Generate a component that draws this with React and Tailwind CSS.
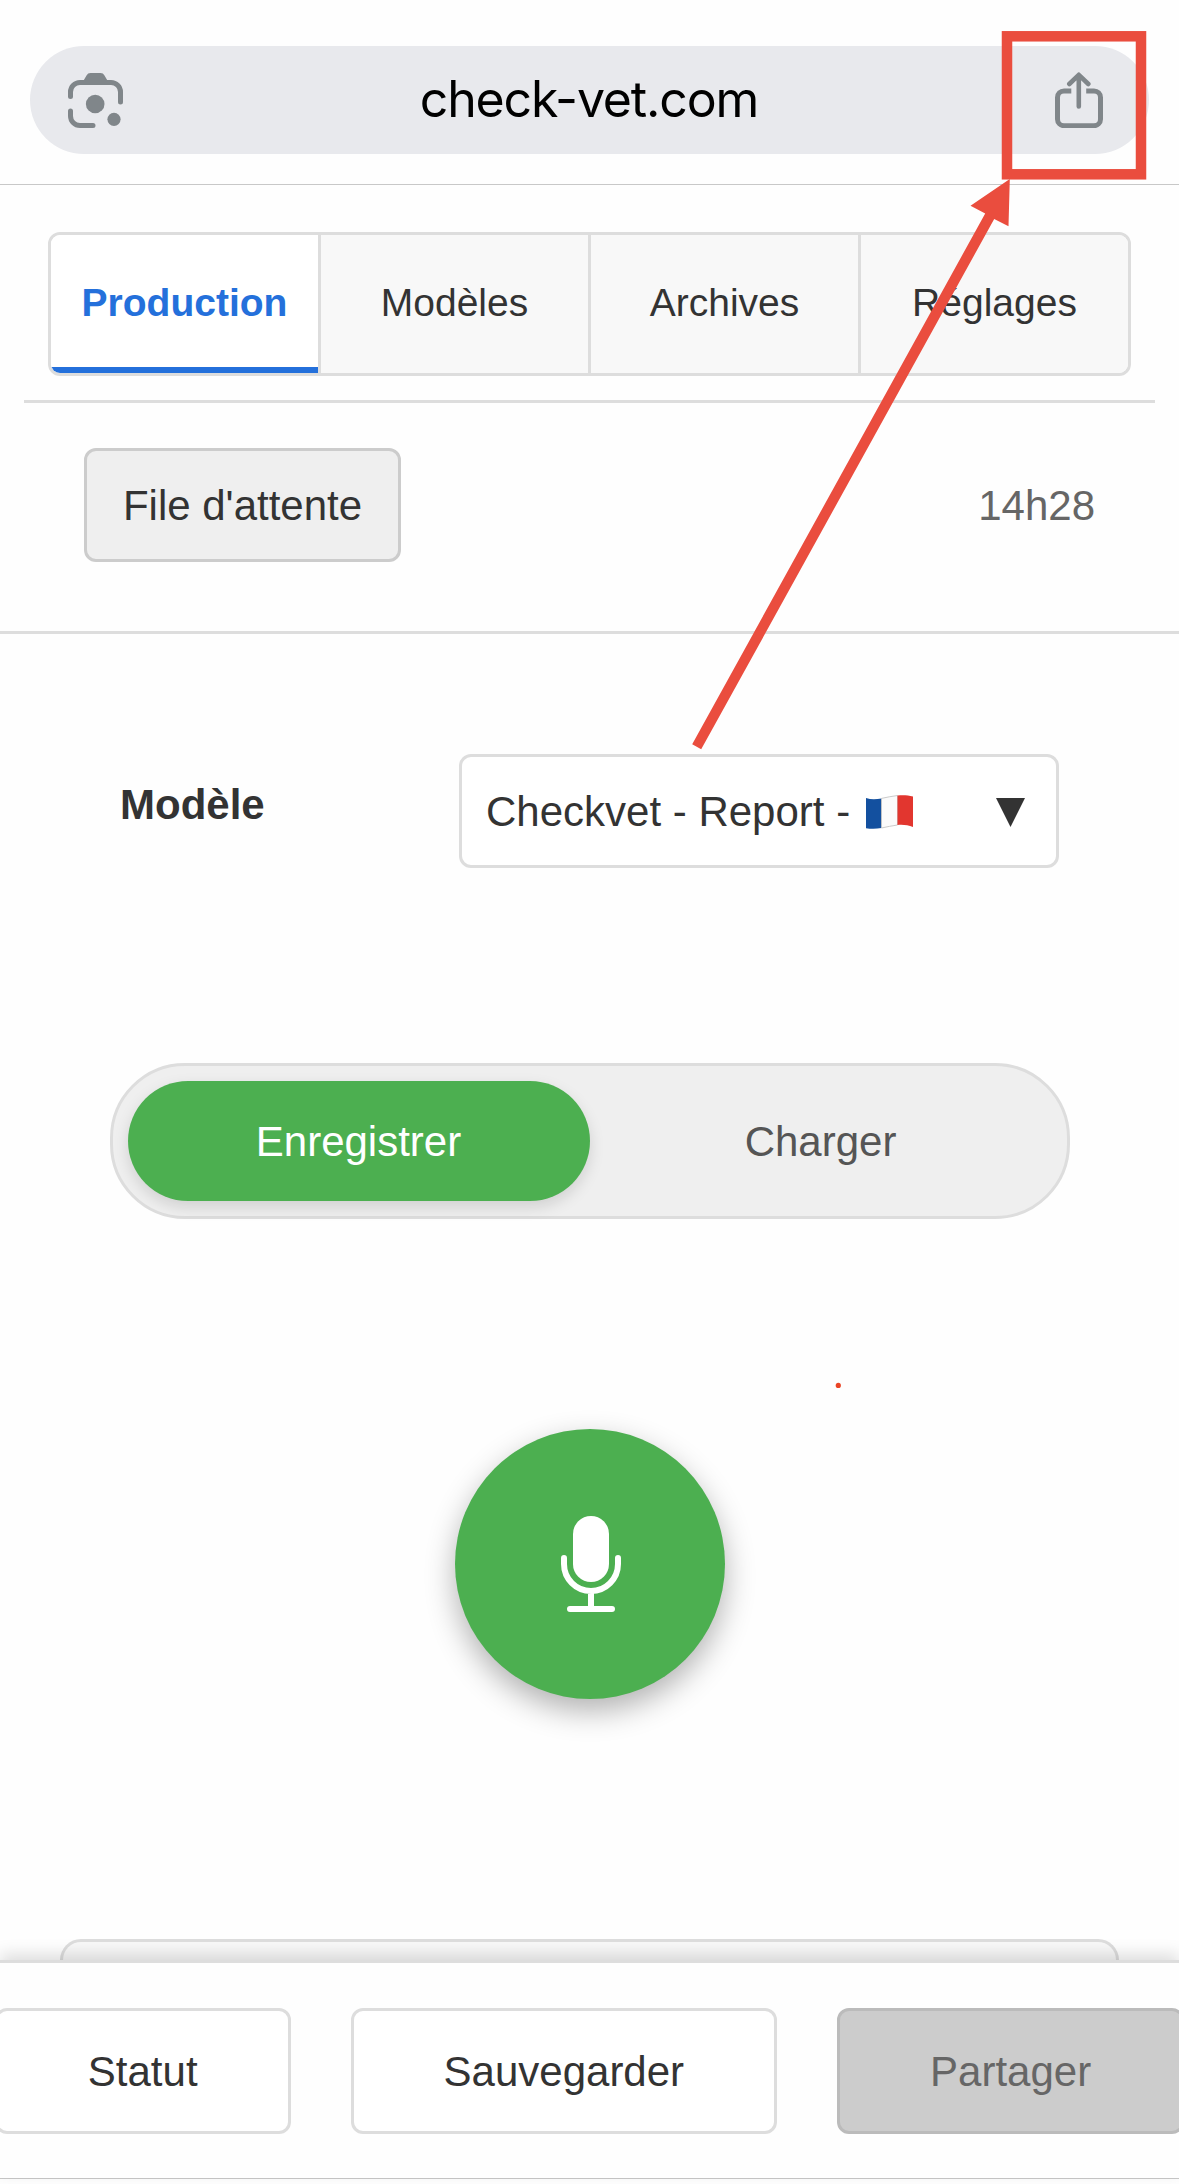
import React from "react";

function LensIcon() {
  return (
    <svg width="55" height="55" viewBox="0 0 55 55" className="block">
      <g fill="none" stroke="#80868a" strokeWidth="5" strokeLinecap="round">
        <path d="M2.5 23.5V19a9.5 9.5 0 0 1 9.5-9.5H43a9.5 9.5 0 0 1 9.5 9.5V29" />
        <path d="M2.5 38V43a9.5 9.5 0 0 0 9.5 9.5H25" />
      </g>
      <path d="M15 8.5L18.5 2.4Q19.8 0 22.5 0H32.5Q35.2 0 36.5 2.4L40 8.5Z" fill="#80868a" />
      <circle cx="27.2" cy="31" r="9.3" fill="#80868a" />
      <circle cx="46" cy="46.3" r="6.6" fill="#80868a" />
    </svg>
  );
}

function ShareIcon() {
  return (
    <svg width="48" height="56" viewBox="0 0 48 56" className="block">
      <g fill="none" stroke="#80868a" strokeWidth="5">
        <path d="M16.3 18.9H9a6.5 6.5 0 0 0-6.5 6.5V47.2a6.5 6.5 0 0 0 6.5 6.5H39a6.5 6.5 0 0 0 6.5-6.5V25.4a6.5 6.5 0 0 0-6.5-6.5H31.2" />
        <path d="M23.8 3.5V34.5M14.3 12L23.8 2.8L33.3 12" strokeLinecap="round" strokeLinejoin="round" strokeWidth="4.6" />
      </g>
    </svg>
  );
}

function FrenchFlag() {
  return (
    <svg width="47" height="34" viewBox="0 0 47 34" className="block">
      <path d="M0 3C5 4.6 10 4.4 15.5 3.4V33C10 34 5 34 0 33.2Z" fill="#13509f" />
      <path d="M15.5 3.4C21 2.4 26 1 31.5.5V30C26 30.6 21 32 15.5 33Z" fill="#fbfbfb" stroke="#bdbdbd" strokeWidth=".8" />
      <path d="M31.5.5C37 -.1 42 .2 47 1.6V32C42 30.2 37 29.4 31.5 30Z" fill="#e2362f" />
    </svg>
  );
}

function MicIcon() {
  return (
    <svg width="60" height="96" viewBox="0 0 60 96" className="ml-0.5 block">
      <rect x="12" y="0" width="36" height="66" rx="18" fill="#fff" />
      <path
        d="M3 42V48a27 27 0 0 0 54 0V42M30 75V93M9 93H51"
        fill="none"
        stroke="#fff"
        strokeWidth="6"
        strokeLinecap="round"
      />
    </svg>
  );
}

const tabs = ["Production", "Modèles", "Archives", "Réglages"];

export default function App() {
  return (
    <div className="relative flex h-[2184px] w-[1179px] flex-col overflow-hidden bg-[#fefefe] font-['Liberation_Sans',Arial,sans-serif] text-[42px] leading-[48px] text-[#333]">
      <header className="h-[185px] shrink-0 border-b border-[#c8c8c8] px-[30px] pt-[46px]">
        <div className="flex h-[108px] items-center justify-between rounded-full bg-[#e8e9ed] pr-[46px] pl-[38px]">
          <LensIcon />
          <span className="pb-[3px] font-['Inter',sans-serif] text-[50px] leading-[60px] tracking-[-1.15px] text-black">
            check-vet.com
          </span>
          <ShareIcon />
        </div>
      </header>

      <nav className="mx-6 h-[218px] shrink-0 border-b-[3px] border-[#ddd] px-6 pt-[47px]">
        <div className="flex h-[144px] w-[1083px] overflow-hidden rounded-xl border-[3px] border-[#ddd] text-[39px]">
          {tabs.map((t, i) => (
            <button
              key={t}
              className={
                i === 0
                  ? "flex-1 border-r-[3px] border-r-[#ddd] bg-white pb-0.5 font-bold text-[#2470db] shadow-[inset_0_-6px_0_#2470db]"
                  : i < 3
                    ? "flex-1 border-r-[3px] border-r-[#ddd] bg-[#f8f8f8] pb-0.5"
                    : "flex-1 bg-[#f8f8f8] pb-0.5"
              }
            >
              {t}
            </button>
          ))}
        </div>
      </nav>

      <section className="flex h-[231px] shrink-0 items-start justify-between border-b-[3px] border-[#ddd] pt-[45px] pr-[84px] pl-[84px]">
        <button className="h-[114px] w-[317px] rounded-xl border-[3px] border-[#ccc] bg-[#efefef] pt-0.5">
          File d'attente
        </button>
        <span className="leading-[116px] text-[#666]">14h28</span>
      </section>

      <main className="flex grow flex-col items-center">
        <div className="mt-[120px] flex h-[114px] w-full justify-between pr-[120px] pl-[120px]">
          <label className="leading-[102px] font-bold">Modèle</label>
          <button className="flex w-[600px] items-center rounded-xl border-[3px] border-[#ddd] bg-white pt-0.5 pr-[31px] pl-6 text-left">
            <span>Checkvet - Report -</span>
            <span className="ml-[16px]">
              <FrenchFlag />
            </span>
            <svg width="29" height="29" viewBox="0 0 29 29" className="ml-auto block">
              <path d="M0 0H29L14.5 29Z" fill="#333" />
            </svg>
          </button>
        </div>

        <div className="mt-[195px] flex h-[156px] w-[960px] rounded-[75px] border-[3px] border-[#ddd] bg-[#efefef] p-[15px]">
          <button className="flex-1 rounded-full bg-[#4caf50] pt-0.5 text-white shadow-[0_6px_15px_rgba(0,0,0,0.13)]">
            Enregistrer
          </button>
          <button className="flex-1 rounded-full pt-0.5 text-[#555]">Charger</button>
        </div>

        <button className="mt-[210px] flex size-[270px] items-center justify-center rounded-full bg-[#4caf50] shadow-[0_12px_30px_rgba(0,0,0,0.3)]">
          <MicIcon />
        </button>

        <div className="mt-[240px] h-[21px] w-[1059px] rounded-t-[24px] border-[3px] border-b-0 border-[#ddd] bg-[#f8f8f8]" />
      </main>

      <footer className="relative h-[218px] shrink-0 border-t-[3px] border-[#ddd] bg-[#fefefe] pt-[45px] shadow-[0_-6px_15px_rgba(0,0,0,0.13)]">
        <div className="flex h-[126px] justify-center gap-[60px]">
          <button className="shrink-0 rounded-xl border-[3px] border-[#ddd] bg-white px-[90px] pt-0.5">Statut</button>
          <button className="shrink-0 rounded-xl border-[3px] border-[#ddd] bg-white px-[90px] pt-0.5">Sauvegarder</button>
          <button className="shrink-0 rounded-xl border-[3px] border-[#bbb] bg-[#ccc] px-[90px] pt-0.5 text-[#666]">
            Partager
          </button>
        </div>
      </footer>
      <div className="h-[6px] shrink-0 border-t border-[#c8c8c8] bg-[#fefefe]" />

      {/* Annotation: frame around the share button, pointer and stray mark */}
      <svg className="pointer-events-none absolute inset-0" width="1179" height="1400" viewBox="0 0 1179 1400">
        <rect x="1007" y="36.3" width="134" height="138" fill="none" stroke="#ea4d3e" strokeWidth="10.5" />
        <path
          d="M1009.8 179L1008.5 226.3L994.2 219L701.2 749.3L692.2 744.3L985.2 213.5L970.5 205.7Z"
          fill="#ea4d3e"
        />
        <circle cx="838.3" cy="1385.4" r="2.6" fill="#ea4526" />
      </svg>
    </div>
  );
}
